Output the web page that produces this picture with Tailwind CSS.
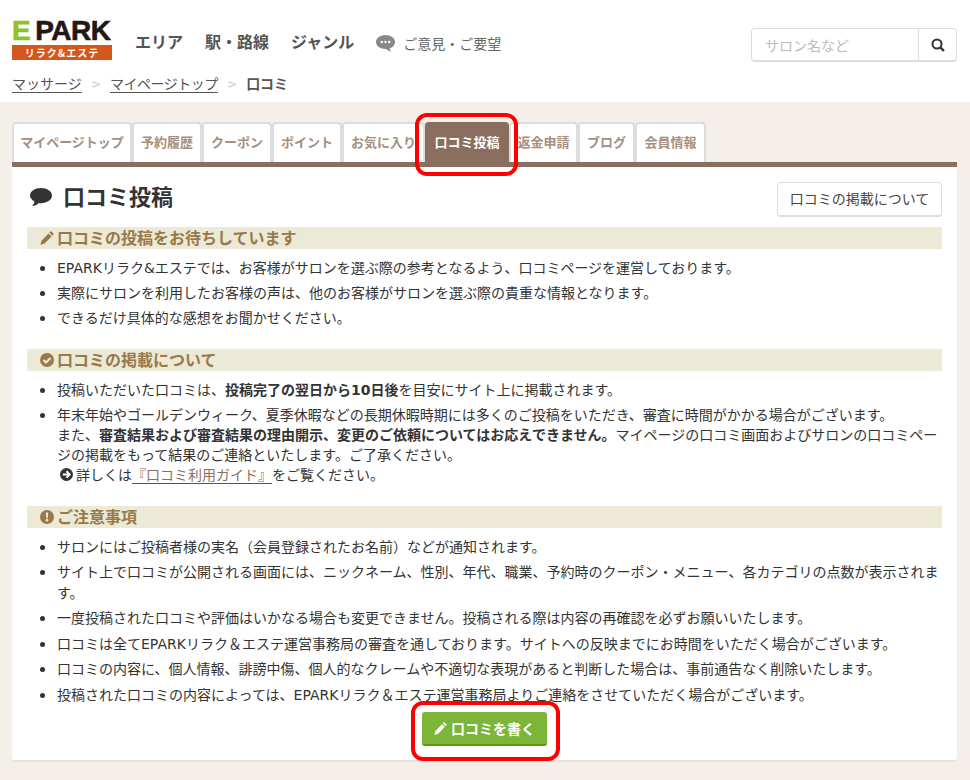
<!DOCTYPE html><html lang="ja">
<head>
  <meta charset="UTF-8" />
  <title>口コミ投稿</title>
  <script src="https://cdn.jsdelivr.net/npm/@tailwindcss/browser@4"></script>
</head>
<body class="relative bg-[#f4efe8] font-['Noto_Sans_CJK_JP','Noto_Sans',sans-serif] text-[#333] text-[14px] leading-[20px] overflow-hidden h-[780px]">

  <!-- header -->
  <header class="bg-white h-[102px] px-3 pt-5">
    <div class="flex items-start h-[42px]">
      <div class="w-[100px] shrink-0">
        <div class="flex items-center h-[21px] leading-none font-['Liberation_Sans',sans-serif] font-bold text-[28px] text-[#231815] tracking-[-0.5px] [-webkit-text-stroke:0.6px_#231815]">
          <span class="text-[#8fc31f] mr-[5px] [-webkit-text-stroke:0.6px_#8fc31f]">E</span><span>PARK</span>
        </div>
        <div class="mt-[4px] h-[15px] bg-[#d4581c] text-white text-[10px] leading-[15px] font-bold text-center tracking-[1px]">リラク&amp;エステ</div>
      </div>
      <nav class="flex items-center ml-[23px] mt-[9px] gap-[22px] text-[16px] leading-6 font-bold text-[#555]">
        <span>エリア</span><span>駅・路線</span><span>ジャンル</span>
      </nav>
      <div class="flex items-center ml-[22px] mt-[11px] text-[14px] leading-6 text-[#666]">
        <svg class="w-[19px] h-[17px] mr-[8px]" viewBox="0 0 19 17"><path fill="#888" d="M9.500 0C14.700 0 19 3 19 7c0 3-2.300 5.400-5.500 6.400.3 1 .9 2.100 1.500 3.100-1.900-.4-3.700-1.500-4.900-2.600H9.500C4.300 13.900 0 11 0 7s4.300-7 9.500-7z"/><circle cx="5.800" cy="7" r="1.200" fill="#fff"/><circle cx="9.500" cy="7" r="1.200" fill="#fff"/><circle cx="13.200" cy="7" r="1.200" fill="#fff"/></svg>
        <span>ご意見・ご要望</span>
      </div>
      <div class="ml-auto flex h-[34px] w-[206px] mt-[8px] mr-px border border-[#ddd] border-b-2 rounded bg-white">
        <div class="flex-1 pl-[13px] text-[14px] leading-[32px] text-[#bbb] border-r border-[#ddd]">サロン名など</div>
        <div class="w-[37px] flex items-center justify-center">
          <svg class="w-[14px] h-[14px]" viewBox="0 0 14 14" fill="none" stroke="#333" stroke-width="2"><circle cx="6" cy="6" r="4.500"/><path stroke-width="2.400" d="M9.300 9.300 13 13"/></svg>
        </div>
      </div>
    </div>
    <div class="flex items-center mt-[11px] text-[14px] leading-[21px]">
      <span class="underline underline-offset-[3px] text-[#555]">マッサージ</span>
      <span class="mx-[10px] text-[#ccc] text-[15px]">&gt;</span>
      <span class="underline underline-offset-[3px] text-[#555] tracking-[-0.5px]">マイページトップ</span>
      <span class="mx-[10px] text-[#ccc] text-[15px]">&gt;</span>
      <span class="font-bold text-[#555]">口コミ</span>
    </div>
  </header>

  <main class="pl-3 pr-[13px] pt-5">
    <!-- tabs -->
    <div class="flex h-[40px] text-[13px] font-bold text-[#a68f80] text-center leading-[36px] whitespace-nowrap">
      <div class="w-[120px] bg-white border-x-2 border-t-2 border-[#ddd] rounded-t">マイページトップ</div>
      <div class="w-[70px] bg-white border-x-2 border-t-2 border-[#ddd] rounded-t">予約履歴</div>
      <div class="w-[70px] bg-white border-x-2 border-t-2 border-[#ddd] rounded-t">クーポン</div>
      <div class="w-[70px] bg-white border-x-2 border-t-2 border-[#ddd] rounded-t">ポイント</div>
      <div class="w-[83px] bg-white border-x-2 border-t-2 border-[#ddd] rounded-t">お気に入り</div>
      <div class="w-[84px] bg-[#8a6f60] text-white rounded-t leading-[40px]">口コミ投稿</div>
      <div class="w-[69px] bg-white border-x-2 border-t-2 border-[#ddd] rounded-t">返金申請</div>
      <div class="w-[57px] bg-white border-x-2 border-t-2 border-[#ddd] rounded-t">ブログ</div>
      <div class="w-[71px] bg-white border-x-2 border-t-2 border-[#ddd] rounded-t">会員情報</div>
    </div>

    <!-- card -->
    <section class="h-[600px] bg-white border-t-[5px] border-[#8a6f60] border-b-2 border-b-[#e8e3da] rounded-b px-[15px]">
      <div class="flex items-start justify-between h-[60px]">
        <h1 class="flex items-center mt-[14px] ml-[3px] text-[22px] leading-[32px] font-bold text-[#333]">
          <svg class="w-[22px] h-[20px] mr-[11px] mt-[2px]" viewBox="0 0 22 20"><path fill="#333" d="M11 1c6 0 11 3.200 11 7.600s-5 7.600-11 7.600c-.8 0-1.500 0-2.200-.2C7 18 4.800 18.900 2 19c1.200-1.200 2.200-2.800 2.500-4.500C1.800 13.200 0 11 0 8.600 0 4.200 5 1 11 1z"/></svg>
          <span class="-mt-[2px]">口コミ投稿</span>
        </h1>
        <div class="mt-[15px] h-[35px] w-[165px] border border-[#ddd] border-b-2 rounded text-center text-[14px] leading-[31px] text-[#444]">口コミの掲載について</div>
      </div>

      <h2 class="flex items-center h-[22px] pl-[13px] pb-[2px] bg-[#ece9d6] text-[16px] leading-[20px] font-bold text-[#97794a]">
        <svg class="w-[14px] h-[14px] mr-[3px] mt-[2px]" viewBox="0 0 14 14"><path fill="#97794a" d="M10.300.6c.4-.3.9-.3 1.200 0l1.900 1.900c.3.3.3.8 0 1.200l-1 1-3.100-3.100zM8.500 2.400l3.100 3.100-7.300 7.300-3.900 1 1-3.900z"/></svg>
        口コミの投稿をお待ちしています
      </h2>
      <ul class="list-disc pl-[30px] mt-[8px] space-y-[5px]">
        <li><span class="font-['DejaVu_Sans'] leading-none">EPARK</span>リラク<span class="font-['DejaVu_Sans'] leading-none">&amp;</span>エステでは、お客様がサロンを選ぶ際の参考となるよう、口コミページを運営しております。</li>
        <li>実際にサロンを利用したお客様の声は、他のお客様がサロンを選ぶ際の貴重な情報となります。</li>
        <li>できるだけ具体的な感想をお聞かせください。</li>
      </ul>

      <h2 class="flex items-center h-[22px] mt-[22px] pl-[13px] pb-[2px] bg-[#ece9d6] text-[16px] leading-[20px] font-bold text-[#97794a]">
        <svg class="w-[14px] h-[14px] mr-[3px] mt-[2px]" viewBox="0 0 14 14"><circle cx="7" cy="7" r="7" fill="#97794a"/><path fill="none" stroke="#ece9d6" stroke-width="2.200" d="M3.500 7 6 9.500 10.500 5"/></svg>
        口コミの掲載について
      </h2>
      <ul class="list-disc pl-[30px] mt-[8px] space-y-[5px]">
        <li>投稿いただいた口コミは、<b>投稿完了の翌日から<span class="font-['DejaVu_Sans'] leading-none">10</span>日後</b>を目安にサイト上に掲載されます。</li>
        <li>年末年始やゴールデンウィーク、夏季休暇などの長期休暇時期には多くのご投稿をいただき、審査に時間がかかる場合がございます。<br>また、<b>審査結果および審査結果の理由開示、変更のご依頼についてはお応えできません。</b>マイページの口コミ画面およびサロンの口コミページの掲載をもって結果のご連絡といたします。ご了承ください。<br>
          <span class="inline-flex items-center ml-[3px]">
            <svg class="w-[13px] h-[13px] mr-[3px]" viewBox="0 0 14 14"><circle cx="7" cy="7" r="7" fill="#333"/><path fill="none" stroke="#fff" stroke-width="2" d="M3 7h7M7 3.500 10.500 7 7 10.500"/></svg>詳しくは<span class="underline underline-offset-[3px] decoration-[#6b4f3f] text-[#8a6f60]">『口コミ利用ガイド』</span>をご覧ください。
          </span>
        </li>
      </ul>

      <h2 class="flex items-center h-[22px] mt-[21px] pl-[13px] pb-[2px] bg-[#ece9d6] text-[16px] leading-[20px] font-bold text-[#97794a]">
        <svg class="w-[14px] h-[14px] mr-[3px] mt-[2px]" viewBox="0 0 14 14"><circle cx="7" cy="7" r="7" fill="#97794a"/><path fill="#ece9d6" d="M5.800 2.500h2.400L7.800 8.200H6.200z"/><circle cx="7" cy="10.300" r="1.300" fill="#ece9d6"/></svg>
        ご注意事項
      </h2>
      <ul class="list-disc pl-[30px] mt-[8px] space-y-[5px] leading-[20.500px]">
        <li>サロンにはご投稿者様の実名（会員登録されたお名前）などが通知されます。</li>
        <li>サイト上で口コミが公開される画面には、ニックネーム、性別、年代、職業、予約時のクーポン・メニュー、各カテゴリの点数が表示されます。</li>
        <li>一度投稿された口コミや評価はいかなる場合も変更できません。投稿される際は内容の再確認を必ずお願いいたします。</li>
        <li>口コミは全て<span class="font-['DejaVu_Sans'] leading-none">EPARK</span>リラク＆エステ運営事務局の審査を通しております。サイトへの反映までにお時間をいただく場合がございます。</li>
        <li>口コミの内容に、個人情報、誹謗中傷、個人的なクレームや不適切な表現があると判断した場合は、事前通告なく削除いたします。</li>
        <li>投稿された口コミの内容によっては、<span class="font-['DejaVu_Sans'] leading-none">EPARK</span>リラク＆エステ運営事務局よりご連絡をさせていただく場合がございます。</li>
      </ul>

      <div class="flex justify-center mt-[8px]">
        <div class="flex items-center justify-center w-[125px] h-[34px] bg-[#7cb538] border-b-2 border-[#5a9a0c] rounded-[3px] text-white text-[14px] font-bold">
          <svg class="w-[13px] h-[13px] mr-[4px]" viewBox="0 0 14 14"><path fill="#fff" d="M10.300.6c.4-.3.9-.3 1.200 0l1.900 1.900c.3.3.3.8 0 1.200l-1 1-3.100-3.100zM8.500 2.400l3.100 3.100-7.300 7.300-3.900 1 1-3.900z"/></svg>
          口コミを書く
        </div>
      </div>
    </section>
  </main>

  <!-- red highlight frames -->
  <div class="absolute left-[415px] top-[113px] w-[103px] h-[63px] border-[4px] border-[#f00] rounded-[12px]"></div>
  <div class="absolute left-[411px] top-[701px] w-[149px] h-[60px] border-[4px] border-[#f00] rounded-[12px]"></div>
</body>
</html>
